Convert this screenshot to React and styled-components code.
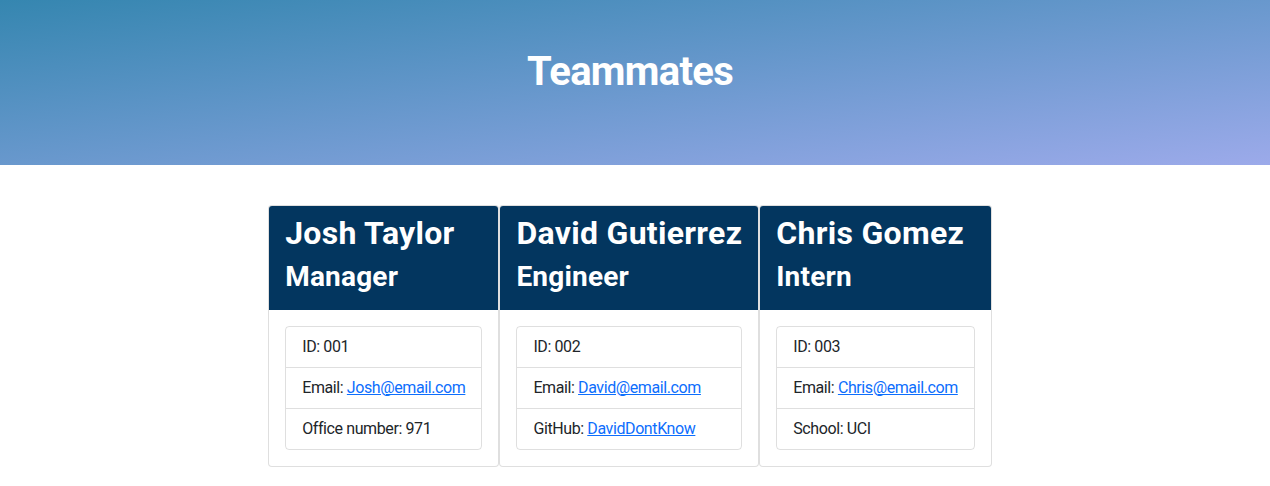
import styled, { createGlobalStyle } from 'styled-components';

const GlobalStyle = createGlobalStyle`
  * { box-sizing: border-box; }
  body {
    margin: 0;
    font-family: Roboto, 'Noto Sans', sans-serif;
    font-size: 16px;
    line-height: 1.5;
    color: #212529;
    background: #fff;
  }
`;

const Banner = styled.header`
  height: 165px;
  padding: 48px 10px 0 0;
  background: linear-gradient(to bottom right, #3586b0, #9caaea);
  text-align: center;
`;

const Title = styled.h1`
  margin: 0;
  font-size: 40px;
  font-weight: 700;
  line-height: 1.2;
  letter-spacing: -0.7px;
  color: #fff;
`;

const Team = styled.main`
  display: flex;
  justify-content: center;
  align-items: flex-start;
  padding: 40px 10px 0 0;
`;

const Card = styled.section`
  display: flex;
  flex-direction: column;
  border: 1px solid rgba(0, 0, 0, 0.125);
  border-radius: 4px;
  background: #fff;
`;

const CardHeader = styled.div`
  padding: 8px 16px;
  background: #03365f;
  color: #fff;
  border-radius: 3px 3px 0 0;
`;

const Name = styled.h2`
  margin: 0 0 8px;
  font-size: 32px;
  font-weight: 700;
  line-height: 1.2;
  letter-spacing: 0.3px;
  white-space: nowrap;
`;

const Role = styled.h3`
  margin: 0 0 8px;
  padding-top: 1px;
  font-size: 28px;
  font-weight: 700;
  line-height: 1.15;
  letter-spacing: 0.2px;
`;

const CardBody = styled.div`
  padding: 16px;
`;

const List = styled.ul`
  margin: 0;
  padding: 0;
  list-style: none;
  border: 1px solid rgba(0, 0, 0, 0.125);
  border-radius: 4px;
`;

const Item = styled.li`
  padding: 8px 16px;
  letter-spacing: -0.4px;
  white-space: nowrap;

  &:not(:last-child) {
    border-bottom: 1px solid rgba(0, 0, 0, 0.125);
  }
`;

const Link = styled.a`
  color: #0d6efd;
  text-decoration: underline;
`;

const team = [
  { name: 'Josh Taylor', role: 'Manager', id: '001', email: 'Josh@email.com', extra: ['Office number', '971'] },
  { name: 'David Gutierrez', role: 'Engineer', id: '002', email: 'David@email.com', extra: ['GitHub', 'DavidDontKnow', true] },
  { name: 'Chris Gomez', role: 'Intern', id: '003', email: 'Chris@email.com', extra: ['School', 'UCI'] },
];

const App = () => {
  return (
    <>
      <GlobalStyle />
      <Banner>
        <Title>Teammates</Title>
      </Banner>
      <Team>
        {team.map((member) => {
          const [label, value, isLink] = member.extra;
          return (
            <Card key={member.id}>
              <CardHeader>
                <Name>{member.name}</Name>
                <Role>{member.role}</Role>
              </CardHeader>
              <CardBody>
                <List>
                  <Item>ID: {member.id}</Item>
                  <Item>
                    Email: <Link href={`mailto:${member.email}`}>{member.email}</Link>
                  </Item>
                  <Item>
                    {label}: {isLink ? <Link href="#">{value}</Link> : value}
                  </Item>
                </List>
              </CardBody>
            </Card>
          );
        })}
      </Team>
    </>
  );
};

export default App;
